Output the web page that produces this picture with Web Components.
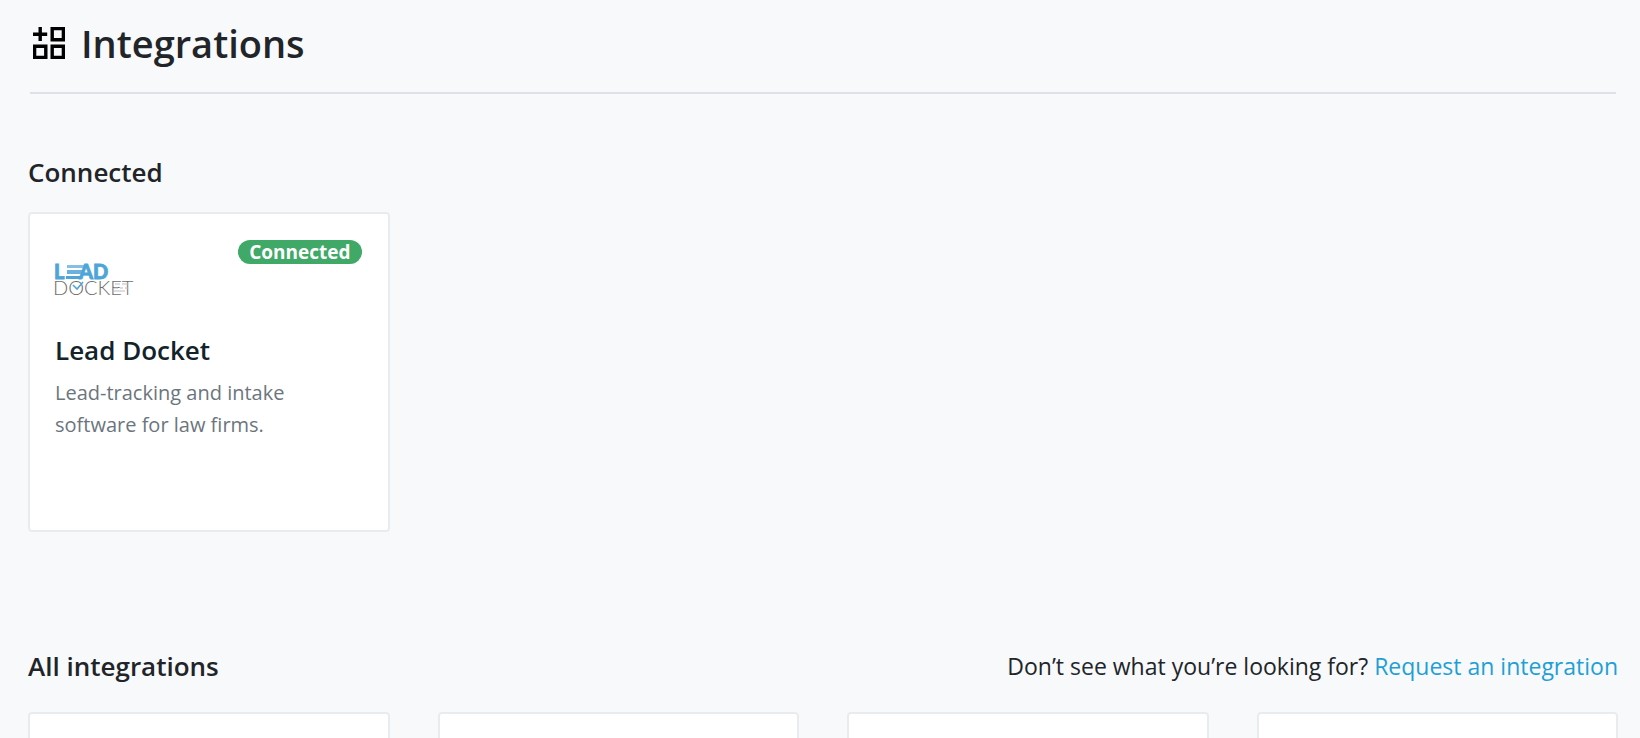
<!DOCTYPE html>
<html lang="en">
<head>
<meta charset="utf-8">
<title>Integrations</title>
<style>
  body { margin: 0; background: #f8f9fb; color: #212529; font-family: "Open Sans", "Noto Sans", sans-serif; }
</style>
</head>
<body>
<integrations-page></integrations-page>
<script>
const define = (name, html) => {
  const template = document.createElement('template');
  template.innerHTML = html;
  customElements.define(name, class extends HTMLElement {
    constructor() {
      super();
      this.attachShadow({ mode: 'open' }).append(template.content.cloneNode(true));
    }
  });
};

define('page-header', `
<style>
  :host { display: block; margin: 0 2px; border-bottom: 2px solid #dee2e6; padding: 15px 0 21px; }
  div { display: flex; align-items: center; gap: 16px; }
  h1 { margin: 0; font-size: 38px; line-height: 56px; font-weight: 600; }
  svg { display: block; margin-left: 3px; }
</style>
<div>
  <svg width="32" height="32" viewBox="0 0 32 32" fill="none" stroke="#000" stroke-width="3.4" aria-hidden="true">
    <path d="M7.2 0V14M0 7.2H14.200M19.200 1.600H30.400V12.800H19.200ZM1.600 19.200H12.800V30.400H1.600ZM19.200 19.200H30.400V30.400H19.200Z"/>
  </svg>
  <h1><slot></slot></h1>
</div>`);

define('status-badge', `
<style>
  :host { display: block; padding: 0 11px; border-radius: 12px; background: #40a967; color: #fff; font-size: 19px; line-height: 24px; font-weight: 700; }
</style><slot></slot>`);

define('lead-docket-logo', `
<style>
  :host { display: block; }
  svg { display: block; overflow: visible; }
</style>
<svg width="80" height="32" viewBox="0 0 80 32" role="img" aria-label="Lead Docket logo">
  <g fill="#4fa5d8" stroke="#4fa5d8" stroke-width=".8" font-family="Lato, sans-serif" font-size="20" font-weight="900">
    <text x="-1" y="15">L</text>
    <text x="24" y="15">AD</text>
  </g>
  <g fill="#4fa5d8">
    <path d="M12 1H30L29 4H12Z" opacity=".7"/>
    <path d="M12 6H28L27 10H12Z" opacity=".85"/>
    <path d="M11 12H26L25 15H11Z"/>
  </g>
  <text x="-2" y="31" fill="#6e6e6e" font-family="Lato, sans-serif" font-size="20" font-weight="300">DOCKET</text>
  <path d="M18 21L22 25L28 18" fill="none" stroke="#4fa5d8" stroke-width="1.600"/>
  <path d="M60 20H65M67 20H73M59 24H63M65 24H68M70 24H73M59 27H70" stroke="#bbb" stroke-width="1"/>
</svg>`);

define('integration-card', `
<style>
  :host { display: block; box-sizing: border-box; min-height: 320px; padding: 26px 26px 32px 25px; border: 2px solid #e9ecef; border-radius: 4px; background: #fff; }
  header { display: flex; justify-content: space-between; align-items: flex-start; min-height: 92px; }
  .logo { padding-top: 24px; }
  h3 { margin: 0; color: #12232b; font-size: 26px; line-height: 36px; font-weight: 600; }
  p { margin: 9px 0 0; max-width: 256px; color: #6c757d; font-size: 20px; line-height: 32px; }
</style>
<header><div class="logo"><slot name="logo"></slot></div><slot name="status"></slot></header>
<h3><slot name="name"></slot></h3>
<p><slot></slot></p>`);

define('empty-card', `
<style>
  :host { display: block; box-sizing: border-box; min-height: 320px; border: 2px solid #e9ecef; border-radius: 4px; background: #fff; }
</style>`);

define('integration-section', `
<style>
  :host { display: block; }
  header { display: flex; justify-content: space-between; align-items: center; margin-bottom: var(--heading-gap, 20px); }
  h2 { margin: 0; font-size: 26px; line-height: 40px; font-weight: 600; }
  .grid { display: grid; grid-template-columns: repeat(4, minmax(0, 1fr)); gap: 48px; }
</style>
<header><h2><slot name="title"></slot></h2><slot name="aside"></slot></header>
<div class="grid"><slot></slot></div>`);

define('request-prompt', `
<style>
  :host { display: block; font-size: 23px; line-height: 40px; }
  a { color: #1f9fd6; text-decoration: none; }
</style>
<slot></slot> <a href="#request">Request an integration</a>`);

define('integrations-page', `
<style>
  :host { display: block; padding: 0 22px 48px 28px; }
  integration-section { margin-top: 58px; }
  integration-section + integration-section { margin-top: 114px; --heading-gap: 26px; }
</style>
<page-header>Integrations</page-header>
<main>
  <integration-section>
    <span slot="title">Connected</span>
    <integration-card>
      <lead-docket-logo slot="logo"></lead-docket-logo>
      <status-badge slot="status">Connected</status-badge>
      <span slot="name">Lead Docket</span>
      Lead-tracking and intake software for law firms.
    </integration-card>
  </integration-section>
  <integration-section>
    <span slot="title">All integrations</span>
    <request-prompt slot="aside">Don’t see what you’re looking for?</request-prompt>
    <empty-card></empty-card><empty-card></empty-card><empty-card></empty-card><empty-card></empty-card>
  </integration-section>
</main>`);
</script>
</body>
</html>
